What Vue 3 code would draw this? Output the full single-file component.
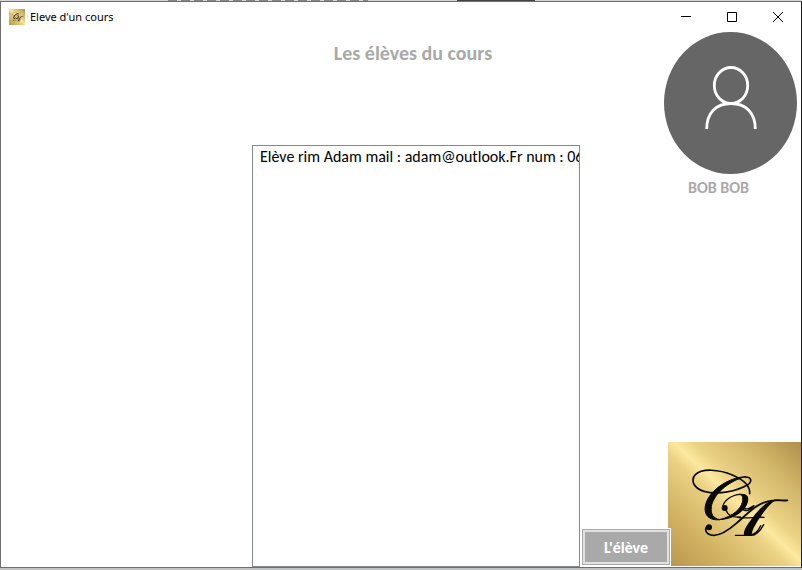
<script setup>
import { ref } from 'vue'

const title = "Eleve d'un cours"
const user = 'BOB BOB'
const selected = ref([])
const students = ref([
  { id: 1, label: 'Elève rim Adam mail : adam@outlook.Fr num : 06' }
])
</script>

<template>
  <div class="desktop">
    <div class="behind" aria-hidden="true">
      <span class="behind-title"></span>
      <span class="behind-block"></span>
    </div>
    <div class="window">
      <header class="titlebar">
        <svg class="app-icon" viewBox="-36 -39 399 372" preserveAspectRatio="none" aria-hidden="true">
          <rect x="-36" y="-39" width="399" height="372" fill="url(#gold)" />
          <use href="#monogram" />
        </svg>
        <span class="caption">{{ title }}</span>
        <div class="controls">
          <button type="button" aria-label="Réduire">
            <svg viewBox="0 0 10 10"><path d="M0 4.5H10" /></svg>
          </button>
          <button type="button" aria-label="Agrandir">
            <svg viewBox="0 0 10 10"><path d="M.5 .5H9.5V9.5H.5Z" /></svg>
          </button>
          <button type="button" aria-label="Fermer">
            <svg viewBox="0 0 10 10"><path d="M0 0L10 10M10 0L0 10" /></svg>
          </button>
        </div>
      </header>

      <main class="content">
        <section class="course">
          <h1 id="course-title">Les élèves du cours</h1>
          <select v-model="selected" class="students" multiple size="20" aria-labelledby="course-title">
            <option v-for="s in students" :key="s.id" :value="s.id">{{ s.label }}</option>
          </select>
        </section>

        <aside class="side">
          <div class="profile">
            <svg class="avatar" viewBox="0 0 133 142" aria-hidden="true">
              <ellipse cx="66.500" cy="71" rx="66.500" ry="71" fill="#666" />
              <g fill="none" stroke="#fff" stroke-width="2.800">
                <ellipse cx="67" cy="53.500" rx="16.700" ry="18" />
                <path d="M42.700 97C42.700 81 52 71.500 67 71.500S91.300 81 91.300 97" />
              </g>
            </svg>
            <p class="user">{{ user }}</p>
          </div>
          <div class="footer">
            <button type="button" class="action">L'élève</button>
            <svg class="logo" viewBox="-36 -39 399 372" preserveAspectRatio="none" role="img" aria-label="Logo CA">
              <defs>
                <linearGradient id="gold" gradientUnits="userSpaceOnUse" x1="-22" y1="346" x2="349" y2="-52">
                  <stop offset="0" stop-color="#b8964c" />
                  <stop offset=".25" stop-color="#d3b565" />
                  <stop offset=".45" stop-color="#ead183" />
                  <stop offset=".52" stop-color="#fce99f" />
                  <stop offset=".6" stop-color="#ead183" />
                  <stop offset=".8" stop-color="#d1b467" />
                  <stop offset="1" stop-color="#b08f4b" />
                </linearGradient>
                <g id="monogram" fill="none" stroke="#0b0906" stroke-linecap="round" stroke-linejoin="round">
                  <path stroke-width="5" d="M209 116C211 93 190 74 157 60C118 43 65 39 46 59C30 77 43 101 72 109C116 121 171 108 202 90C217 80 216 66 195 66" />
                  <path fill="#0b0906" stroke-width="3" d="M196 65C145 66 75 112 75 163C76 187 95 197 120 194C100 190 91 178 94 155C99 121 142 79 196 65Z" />
                  <path fill="#0b0906" stroke-width="3" d="M178 118C200 116 208 125 201 145C193 168 162 192 118 194C160 184 183 160 187 142C190 127 188 120 178 118Z" />
                  <path stroke-width="4" d="M180 118C149 121 126 142 129 160M138 164C141 178 155 189 181 186M192 120C207 124 202 140 194 151C190 164 202 166 222 152C212 167 196 171 188 162" />
                  <circle cx="134" cy="159" r="9" fill="#0b0906" stroke="none" />
                  <path stroke-width="5.500" d="M90 214C76 211 73 229 84 236C108 251 145 226 168 206C207 172 235 139 281 136C298 134 306 138 322 136" />
                  <circle cx="87" cy="217" r="9" fill="#0b0906" stroke="none" />
                  <path fill="#0b0906" stroke-width="4" d="M281 137C260 152 231 194 219 218C214 229 212 238 215 241L195 241C189 233 197 220 209 203C226 178 246 155 267 142Z" />
                  <path stroke-width="4" d="M173 187C198 192 222 185 252 187M166 241H214C232 241 243 224 251 209M210 240C228 238 237 223 242 212M281 137L302 136" />
                </g>
              </defs>
              <rect x="-36" y="-39" width="399" height="372" fill="url(#gold)" />
              <use href="#monogram" />
            </svg>
          </div>
        </aside>
      </main>
    </div>
  </div>
</template>

<style>
body {
  margin: 0;
  background: #c2c2c2;
}
</style>

<style scoped>
.desktop {
  display: flex;
  flex-direction: column;
  box-sizing: border-box;
  min-height: 100vh;
  padding-bottom: 2px;
  font-family: Carlito, Lato, sans-serif;
}

.behind {
  display: flex;
  gap: 89px;
  height: 1px;
  padding-left: 168px;
  background: #d6d6d6;
}

.behind-title {
  width: 200px;
  background: repeating-linear-gradient(90deg, #858585 0 9px, #d6d6d6 9px 13px);
}

.behind-block {
  width: 78px;
  background: #444;
}

.window {
  display: flex;
  flex: 1;
  flex-direction: column;
  border: 1px solid #6e6e6e;
  border-right-color: #1c1c1c;
  background: #fff;
}

.titlebar {
  display: flex;
  align-items: center;
  height: 30px;
  padding-left: 8px;
}

.app-icon {
  width: 16px;
  height: 16px;
}

.caption {
  flex: 1;
  padding-left: 5px;
  color: #000;
  font-family: "Segoe UI", "Noto Sans", sans-serif;
  font-size: 11px;
  line-height: 16px;
}

.controls {
  display: flex;
}

.controls button {
  display: flex;
  align-items: center;
  justify-content: center;
  width: 46px;
  height: 28px;
  padding: 0;
  border: 0;
  background: none;
}

.controls svg {
  width: 10px;
  height: 10px;
  fill: none;
  stroke: #000;
  stroke-width: 1px;
}

.content {
  display: grid;
  flex: 1;
  grid-template-columns: 1fr 328px 221px;
}

.course {
  display: flex;
  grid-column: 2;
  flex-direction: column;
  min-width: 0;
}

h1 {
  height: 92px;
  margin: 0;
  padding: 9px 6px 12px 0;
  color: #a9a9a9;
  font-size: 20px;
  font-weight: 700;
  line-height: 24px;
  text-align: center;
}

.students {
  box-sizing: border-box;
  flex: 1;
  width: 100%;
  margin: 0;
  padding: 1px 0;
  overflow: hidden;
  border: 1px solid #828790;
  border-radius: 0;
  outline: 0;
  background: #fff;
  color: #000;
  font-family: inherit;
  font-size: 16px;
}

.students option {
  min-height: 20px;
  padding: 0 0 0 7px;
  line-height: 20px;
}

.side {
  display: flex;
  flex-direction: column;
  justify-content: space-between;
  align-items: flex-end;
}

.profile {
  width: 133px;
  margin-right: 4px;
}

.avatar {
  display: block;
  width: 133px;
  height: 142px;
}

.user {
  margin: 4px 0 0;
  padding-right: 24px;
  color: #a9a9a9;
  font-size: 16px;
  font-weight: 700;
  line-height: 20px;
  text-align: center;
}

.footer {
  display: flex;
  align-items: flex-end;
  padding-bottom: 1px;
}

.action {
  z-index: 1;
  width: 88px;
  height: 36px;
  margin: 0 -2px 1px 0;
  padding: 0;
  border: 1px solid #a9a9a9;
  outline: 1px solid #fff;
  background: #a9a9a9;
  box-shadow: inset 0 0 0 2px #e1e1e1;
  color: #fff;
  font-family: inherit;
  font-size: 16px;
  font-weight: 700;
}

.logo {
  display: block;
  width: 133px;
  height: 124px;
}
</style>
